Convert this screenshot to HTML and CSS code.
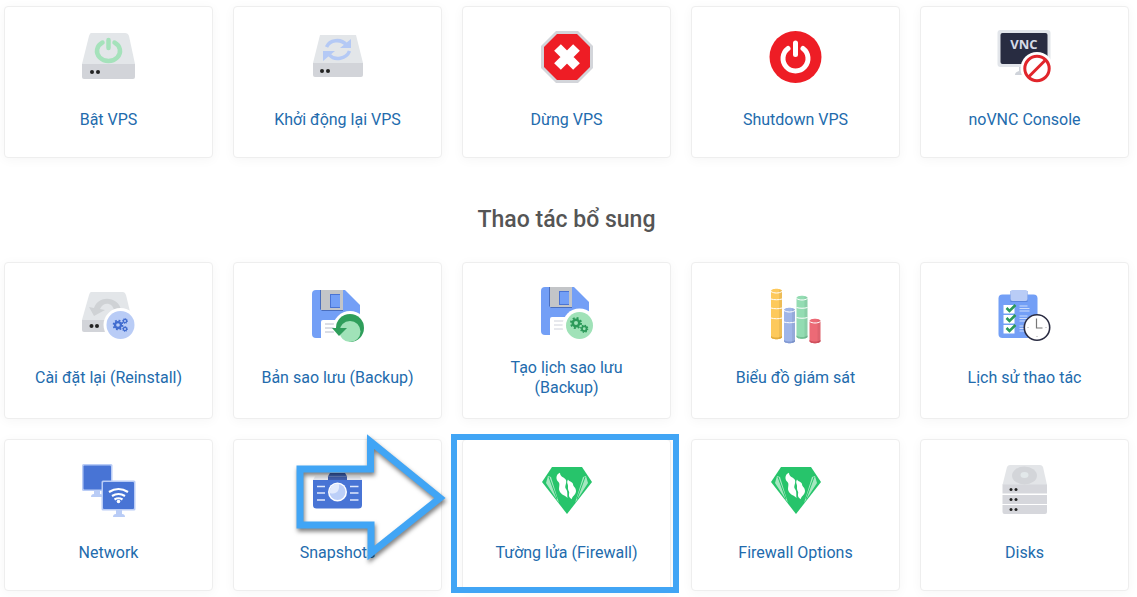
FILE: index.html
```html
<!DOCTYPE html>
<html lang="vi">
<head>
    <meta charset="UTF-8">
    <meta name="viewport" content="width=device-width, initial-scale=1.0">
    <title>Quản lý VPS</title>
    <link rel="stylesheet" href="styles.css">
</head>
<body>
    <!-- Shapes used by more than one icon -->
    <svg class="defs" aria-hidden="true">
        <symbol id="gear" viewBox="0 0 24 24">
            <circle cx="12" cy="12" r="6.5" fill="none" stroke="currentColor" stroke-width="5"/>
            <circle cx="12" cy="12" r="10" fill="none" stroke="currentColor" stroke-width="4" stroke-dasharray="3.93 3.93"/>
        </symbol>
        <symbol id="floppy" viewBox="0 0 64 64">
            <path fill="#739ff6" d="M10 6h29l15 15v33H10a4 4 0 0 1-4-4V10a4 4 0 0 1 4-4z"/>
            <path fill="#4a6ebd" d="M14 6h23v21H16l-2-2z"/>
            <path fill="#c3c5c8" d="M15 6h22v20H15z"/>
            <path fill="#4a74d4" d="M24 10h10v14H24z"/>
            <path fill="#739ff6" d="M25 11h9v12h-9z"/>
            <path fill="#fff" d="M15 38a2 2 0 0 1 2-2h37v20H15z"/>
            <path stroke="#cfd2dc" stroke-width="1" d="M19 40h12M19 44h12M19 48h12"/>
        </symbol>
        <symbol id="shield" viewBox="0 0 64 64">
            <path fill="#27c46b" d="M17 9h30l10 15-25 32L7 24z"/>
            <path fill="#a5e8c1" d="M13 18l3 1 8 26-13-20zM51 18l-3 1-8 26 13-20z"/>
            <path stroke="#27c46b" stroke-width="1" d="M14 19l8 22M50 19l-8 22"/>
            <path fill="#fff" d="M25 14.700C21 16 20.500 21 23 23.500c3 2.500 0 6.500 1.500 9.500 1.500 4 5.500 4 8 7-.5-4 .5-6-1.500-9-2-3 1-5 0-9-1.500-3-6-3-6-7.300z"/>
            <path fill="#fff" d="M33 21.500c-2 3.500.5 4.500 0 7.500-.5 4 2 4 1 7-.5 3 1 4 2.700 5.300.3-3.300 4.300-4.300 4.300-8.300s-3-4-3-7c-1-3-4-2-5-4.500z"/>
        </symbol>
    </svg>

    <main class="container">
        <section class="actions">
            <a class="card" href="#">
                <svg class="icon" viewBox="0 0 64 64" aria-hidden="true">
                    <path fill="#e3e6e9" d="M14 8h34q3 0 4 3l6 28H5l7-28q1-3 2-3z"/>
                    <path fill="#d2d4d9" d="M5 39h53v13q0 2-2 2H7q-2 0-2-2z"/>
                    <circle cx="15" cy="47" r="2" fill="#222"/>
                    <circle cx="21" cy="47" r="2" fill="#222"/>
                    <path fill="none" stroke="#a5e2bb" stroke-width="4.500" stroke-linecap="round" d="M25.500 17.500a11.500 10 0 1 0 12 0M31.500 15v8"/>
                </svg>
                <span class="label">Bật VPS</span>
            </a>
            <a class="card" href="#">
                <svg class="icon" viewBox="0 0 64 64" aria-hidden="true">
                    <path fill="#e3e6e9" d="M14 10h36l7 28H7z"/>
                    <path fill="#d2d4d9" d="M7 38h50v12q0 2-2 2H9q-2 0-2-2z"/>
                    <circle cx="16" cy="46" r="2" fill="#222"/>
                    <circle cx="22" cy="46" r="2" fill="#222"/>
                    <path fill="none" stroke="#b4c9f5" stroke-width="3.500" d="M20.500 22c3-7 14-9 20-2M43.500 26c-3 8-15 10-20 4"/>
                    <path fill="#b4c9f5" d="M45 14v9H34zM17 26h12L17 36z"/>
                </svg>
                <span class="label">Khởi động lại VPS</span>
            </a>
            <a class="card" href="#">
                <svg class="icon" viewBox="0 0 64 64" aria-hidden="true">
                    <path fill="#d3d5da" d="M21 6h22l15 15v22L43 58H21L6 43V21z"/>
                    <path fill="#ee1d25" d="M22 9h20l13 13v20L42 55H22L9 42V22z"/>
                    <path stroke="#fff" stroke-width="9.500" d="M22.500 22.500l19 19M41.500 22.500l-19 19"/>
                </svg>
                <span class="label">Dừng VPS</span>
            </a>
            <a class="card" href="#">
                <svg class="icon" viewBox="0 0 64 64" aria-hidden="true">
                    <circle cx="31.500" cy="32" r="26" fill="#ee1d25"/>
                    <path fill="none" stroke="#fff" stroke-width="5" stroke-linecap="round" d="M24 23.500a12.500 12.500 0 1 0 15 0M31.500 18v11.500"/>
                </svg>
                <span class="label">Shutdown VPS</span>
            </a>
            <a class="card" href="#">
                <svg class="icon" viewBox="0 0 64 64" aria-hidden="true">
                    <path fill="#cfd3da" d="M26 42h10v8H22q0-3 4-4z"/>
                    <rect x="4.500" y="5" width="53" height="37" rx="3" fill="#e2e5ea"/>
                    <rect x="7.500" y="8" width="47" height="31" rx="2" fill="#282c41"/>
                    <text class="vnc" x="31" y="24" text-anchor="middle">VNC</text>
                    <circle cx="44" cy="43.500" r="16.500" fill="#fff"/>
                    <circle cx="44" cy="43.500" r="12.200" fill="none" stroke="#e1252b" stroke-width="3"/>
                    <path stroke="#e1252b" stroke-width="3" d="M35.500 52l17-17"/>
                </svg>
                <span class="label">noVNC Console</span>
            </a>
        </section>

        <h2>Thao tác bổ sung</h2>

        <section class="actions">
            <a class="card" href="#">
                <svg class="icon" viewBox="0 0 64 64" aria-hidden="true">
                    <path fill="#e3e6e9" d="M14 11h32q2 0 3 3l6 25H5l7-25q1-3 2-3z"/>
                    <path fill="#d2d4d9" d="M5 39h50v12H7q-2 0-2-2z"/>
                    <circle cx="14.500" cy="45" r="2" fill="#222"/>
                    <circle cx="20" cy="45" r="2" fill="#222"/>
                    <path fill="#cfd2d5" d="M44 29C42 16 22 13 17 27l-5-1 5 9 11-6-5-1c3-7 12-7 14 1z"/>
                    <circle cx="43.500" cy="44" r="17" fill="#fff"/>
                    <circle cx="43.500" cy="44" r="14" fill="#b9ccf6"/>
                    <g color="#416ccf">
                        <use href="#gear" x="35.500" y="38.500" width="11" height="11"/>
                        <use href="#gear" x="45" y="37" width="6" height="6"/>
                        <use href="#gear" x="45" y="45" width="6" height="6"/>
                    </g>
                </svg>
                <span class="label">Cài đặt lại (Reinstall)</span>
            </a>
            <a class="card" href="#">
                <svg class="icon" viewBox="0 0 64 64" aria-hidden="true">
                    <use href="#floppy" y="3" width="64" height="64"/>
                    <circle cx="44" cy="47" r="17" fill="#fff"/>
                    <path stroke="#cfd2dc" stroke-width="1" d="M19 43h9M19 47h9M19 51h9"/>
                    <path fill="#2f9e5b" d="M30 47a14 14 0 1 1 14 14z"/>
                    <circle cx="44" cy="50.500" r="10.500" fill="#a0e2b8"/>
                    <path fill="#2f9e5b" d="M26 47h15l-8 8z"/>
                </svg>
                <span class="label">Bản sao lưu (Backup)</span>
            </a>
            <a class="card" href="#">
                <svg class="icon" viewBox="0 0 64 64" aria-hidden="true">
                    <use href="#floppy" width="64" height="64"/>
                    <circle cx="44.500" cy="44.500" r="17" fill="#fff"/>
                    <circle cx="44.500" cy="44.500" r="13.500" fill="#a0e2b8"/>
                    <g color="#2c9a5a">
                        <use href="#gear" x="35" y="36" width="12" height="12"/>
                        <use href="#gear" x="45" y="43.500" width="8.500" height="8.500"/>
                    </g>
                </svg>
                <span class="label">Tạo lịch sao lưu (Backup)</span>
            </a>
            <a class="card" href="#">
                <svg class="icon" viewBox="0 0 64 64" aria-hidden="true">
                    <path fill="#fdc95c" d="M7 10c0-3 11-3 11 0v46c0 3-11 3-11 0z"/>
                    <path fill="#9fb5e8" d="M20 29c0-3 11-3 11 0v31c0 3-11 3-11 0z"/>
                    <path fill="#93dcb2" d="M32.500 17c0-3 11-3 11 0v38.500c0 3-11 3-11 0z"/>
                    <path fill="#ec6a76" d="M45.500 40c0-3 11-3 11 0v20c0 3-11 3-11 0z"/>
                    <path fill="#e4ad3f" d="M7 55c3 2 8 2 11 0v1c0 3-11 3-11 0z"/>
                    <path fill="#8199d2" d="M20 59c3 2 8 2 11 0v1c0 3-11 3-11 0z"/>
                    <path fill="#74bf94" d="M32.500 54.500c3 2 8 2 11 0v1c0 3-11 3-11 0z"/>
                    <path fill="#cf505d" d="M45.500 59c3 2 8 2 11 0v1c0 3-11 3-11 0z"/>
                    <path fill="#000" opacity=".060" d="M15 9h3v48h-3zM28 28h3v33h-3zM40.500 16h3v41h-3zM53.500 39h3v22h-3z"/>
                    <path fill="none" stroke="#fff" stroke-width="1" d="M7 10.500c3 2 8 2 11 0M7 18c3 1 8 1 11 0M7 27c3 1 8 1 11 0M7 37c3 1 8 1 11 0M20 29.500c3 2 8 2 11 0M20 41c3 1 8 1 11 0M32.500 17.500c3 2 8 2 11 0M32.500 26.500c3 1 8 1 11 0M32.500 36.500c3 1 8 1 11 0M45.500 40.500c3 2 8 2 11 0"/>
                </svg>
                <span class="label">Biểu đồ giám sát</span>
            </a>
            <a class="card" href="#">
                <svg class="icon" viewBox="0 0 64 64" aria-hidden="true">
                    <rect x="5.500" y="13.500" width="39" height="43.500" rx="4" fill="#739ff6"/>
                    <rect x="17.500" y="10" width="17" height="11" fill="#5c86dc"/>
                    <rect x="17.500" y="9" width="17" height="11" rx="2" fill="#b9ccf6"/>
                    <path fill="#fff" d="M10.500 24h11v8.500h-11zM10.500 34h11v8.500h-11zM10.500 44h11v8.500h-11z"/>
                    <path fill="none" stroke="#2c9a5a" stroke-width="2.500" d="M13.500 27l3 3 6-6M13.500 37l3 3 6-6M13.500 47l3 3 6-6"/>
                    <path stroke="#cddcfb" stroke-width="1" d="M26.500 25h8M26.500 27.500h10M26.500 30h10M26.500 35h8M26.500 37.500h10M26.500 40h10M26.500 45h8M26.500 47.500h10M26.500 50h10"/>
                    <circle cx="44" cy="46.500" r="12.700" fill="#fff" stroke="#2a2c42" stroke-width="1.600"/>
                    <path fill="none" stroke="#777" stroke-width="1.200" d="M43.500 37.500v9.500h6"/>
                    <path stroke="#aaa" stroke-width="1" d="M34.500 46.500h1M52.500 46.500h1M44 55v1"/>
                </svg>
                <span class="label">Lịch sử thao tác</span>
            </a>

            <a class="card" href="#">
                <svg class="icon" viewBox="0 0 64 64" aria-hidden="true">
                    <path fill="#b9ccf6" d="M17 33h6v3q3 0 3 3H14q0-3 3-3z"/>
                    <rect x="5" y="6" width="30.500" height="27" rx="1.500" fill="#b9ccf6"/>
                    <rect x="6.500" y="7.500" width="27.500" height="24" rx="1" fill="#4874d5"/>
                    <path fill="#b9ccf6" d="M39 52h6v4q3 0 3 3H36q0-3 3-3z"/>
                    <rect x="24.500" y="22.500" width="34" height="30" rx="1.500" fill="#b9ccf6"/>
                    <rect x="26" y="24" width="31" height="27" rx="1" fill="#4874d5"/>
                    <path fill="none" stroke="#fff" stroke-width="2.200" d="M32 34q9.500-6 19 0M35 38q6.500-4 13 0M37.500 41.500q4-2.500 8 0"/>
                    <circle cx="41.500" cy="43.500" r="1.800" fill="#fff"/>
                </svg>
                <span class="label">Network</span>
            </a>
            <a class="card" href="#">
                <svg class="icon" viewBox="0 0 64 64" aria-hidden="true">
                    <path fill="#4166b8" d="M24 15h15l3 5H21z"/>
                    <path fill="#e6e9f0" d="M9 18.500h45l2 3.500H7z"/>
                    <path fill="#3f5fae" d="M22 18.500h19v3.500H22z"/>
                    <path fill="#4874d5" d="M7 22h49v25q0 3.500-3.500 3.500h-42Q7 50.500 7 47z"/>
                    <path stroke="#dfe8fc" stroke-width="1.300" d="M11 28.500h8M11 35h8M11 42h8M44 28.500h8.500M44 35h8.500M44 42h8.500"/>
                    <circle cx="31.500" cy="34" r="9.500" fill="#fff"/>
                    <circle cx="31.500" cy="34" r="8" fill="#bccff8"/>
                    <path fill="#e3ebfd" d="M24 35c6 2 10-2 9-9-6-1-10 4-9 9z"/>
                </svg>
                <span class="label">Snapshots</span>
                <svg class="arrow" viewBox="0 0 160 140" aria-hidden="true">
                    <path d="M9 39h70.500V11.500L149 68l-69 55V95H9z"/>
                </svg>
            </a>
            <a class="card card-active" href="#">
                <svg class="icon" viewBox="0 0 64 64" aria-hidden="true">
                    <use href="#shield" width="64" height="64"/>
                </svg>
                <span class="label">Tường lửa (Firewall)</span>
            </a>
            <a class="card" href="#">
                <svg class="icon" viewBox="0 0 64 64" aria-hidden="true">
                    <use href="#shield" width="64" height="64"/>
                </svg>
                <span class="label">Firewall Options</span>
            </a>
            <a class="card" href="#">
                <svg class="icon" viewBox="0 0 64 64" aria-hidden="true">
                    <path fill="#e3e5e8" d="M17 7h30q2 0 3 2l4 18H9.500L14 9q1-2 3-2z"/>
                    <ellipse cx="31.500" cy="17.500" rx="12.500" ry="9" fill="#d3d5d9"/>
                    <ellipse cx="31.500" cy="17" rx="4" ry="3" fill="#e2e8ea"/>
                    <path fill="#d6d7dc" d="M9.500 26.500H54v9H9.500zM9.500 37H54v9H9.500zM9.500 47H54v7q0 2-2 2H11.500q-2 0-2-2z"/>
                    <g fill="#222">
                        <circle cx="18" cy="31.500" r="1.500"/><circle cx="23" cy="31.500" r="1.500"/>
                        <circle cx="18" cy="41.500" r="1.500"/><circle cx="23" cy="41.500" r="1.500"/>
                        <circle cx="18" cy="51.500" r="1.500"/><circle cx="23" cy="51.500" r="1.500"/>
                    </g>
                </svg>
                <span class="label">Disks</span>
            </a>
        </section>
    </main>
</body>
</html>
```
FILE: styles.css
```css
* {
    margin: 0;
    padding: 0;
    box-sizing: border-box;
}

body {
    font-family: Roboto, "Liberation Sans", sans-serif;
    font-size: 16px;
    line-height: 20px;
    color: #555;
    background-color: #fff;
}

.defs {
    display: none;
}

.container {
    padding: 6px 8px 6px 4px;
}

.actions {
    display: grid;
    grid-template-columns: repeat(5, 1fr);
    gap: 20px;
}

h2 {
    margin: 48px 0 28px;
    font-size: 23px;
    font-weight: 500;
    line-height: 28px;
    text-align: center;
}

.card {
    position: relative;
    display: flex;
    flex-direction: column;
    align-items: center;
    gap: 10px;
    padding: 18px;
    background-color: #fff;
    border: 1px solid #eee;
    border-radius: 4px;
    box-shadow: 0 2px 12px rgba(0, 0, 0, 0.04);
    color: #226bad;
    text-align: center;
    text-decoration: none;
}

.card:hover {
    border-color: #ccc;
}

.icon {
    width: 64px;
    height: 64px;
}

.label {
    flex: 1;
    display: flex;
    align-items: center;
    min-height: 40px;
    padding: 3px 0 2px;
}

.vnc {
    font-family: "Open Sans", sans-serif;
    font-size: 13px;
    font-weight: 700;
    fill: #d5dae6;
}

/* highlighted card */
.card-active::after {
    content: "";
    position: absolute;
    inset: -6px -9px -3px -12px;
    border: 6px solid #41a5f5;
}

.arrow {
    position: absolute;
    left: 57px;
    top: -10px;
    z-index: 1;
    width: 160px;
    height: 140px;
    pointer-events: none;
    filter: drop-shadow(1px 3px 2px rgba(0, 0, 0, 0.5));
}

.arrow path {
    fill: none;
    stroke: #41a5f5;
    stroke-width: 7px;
}
```
